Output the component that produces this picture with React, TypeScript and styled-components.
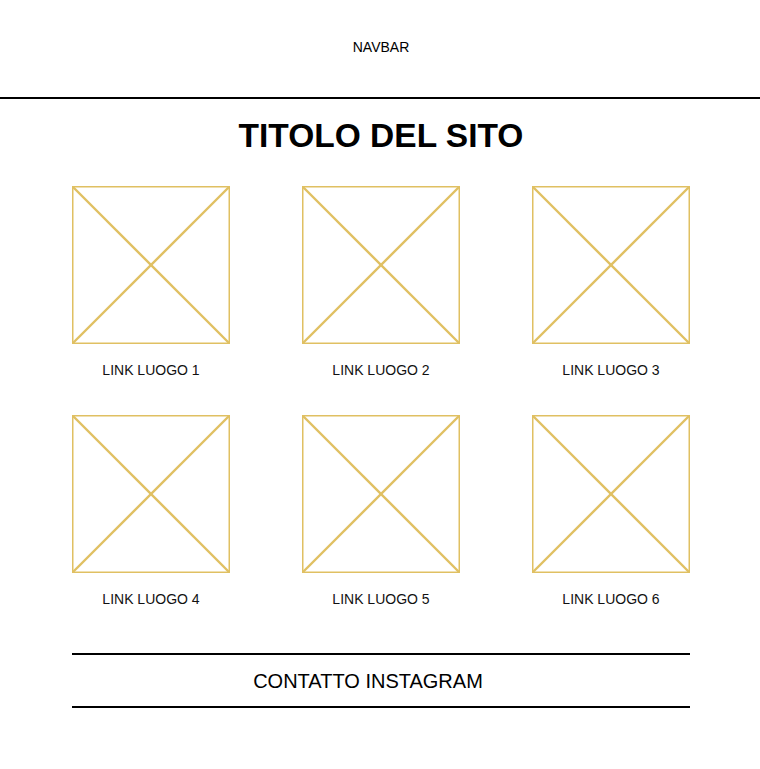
import React from "react";
import styled, { createGlobalStyle } from "styled-components";

const Global = createGlobalStyle`
  html, body { margin: 0; padding: 0; background: #fff; }
  body { font-family: "Liberation Sans", Arial, Helvetica, sans-serif; color: #000; }
`;

const Page = styled.div`
  width: 760px;
  min-height: 769px;
`;

const Navbar = styled.header`
  height: 99px;
  display: flex;
  align-items: center;
  justify-content: center;
  font-size: 14px;
  padding-left: 2px;
  padding-bottom: 4px;
  box-sizing: border-box;
  border-bottom: 2px solid #000;
`;

const Title = styled.h1`
  margin: 18px 0 0;
  text-align: center;
  font-size: 33.5px;
  line-height: 38px;
  font-weight: 700;
  padding-left: 2px;
`;

const Grid = styled.div`
  margin: 31px 0 0 72px;
  width: 618px;
  display: grid;
  grid-template-columns: repeat(3, 158px);
  justify-content: space-between;
  row-gap: 37px;
`;

const Card = styled.a`
  display: flex;
  flex-direction: column;
  align-items: center;
  gap: 18px;
  color: #111;
  text-decoration: none;
`;

const Label = styled.span`
  font-size: 14px;
  line-height: 16px;
  white-space: nowrap;
`;

const Footer = styled.footer`
  margin: 46px 0 0 72px;
  width: 618px;
  border-top: 2px solid #000;
  border-bottom: 2px solid #000;
  padding: 15px 26px 13px 0;
  box-sizing: border-box;
  text-align: center;
  font-size: 20px;
  line-height: 23px;
`;

const GOLD = "#e0c062";

const Placeholder = () => (
  <svg width="158" height="158" viewBox="0 0 158 158">
    <rect x="0.75" y="0.75" width="156.5" height="156.5" fill="none" stroke={GOLD} strokeWidth="1.5" />
    <line x1="1" y1="1" x2="157" y2="157" stroke={GOLD} strokeWidth="2.4" />
    <line x1="157" y1="1" x2="1" y2="157" stroke={GOLD} strokeWidth="2.4" />
  </svg>
);

const places = [1, 2, 3, 4, 5, 6];

export default function App() {
  return (
    <Page>
      <Global />
      <Navbar>NAVBAR</Navbar>
      <Title>TITOLO DEL SITO</Title>
      <Grid>
        {places.map((n) => (
          <Card key={n} href="#">
            <Placeholder />
            <Label>LINK LUOGO {n}</Label>
          </Card>
        ))}
      </Grid>
      <Footer>CONTATTO INSTAGRAM</Footer>
    </Page>
  );
}
